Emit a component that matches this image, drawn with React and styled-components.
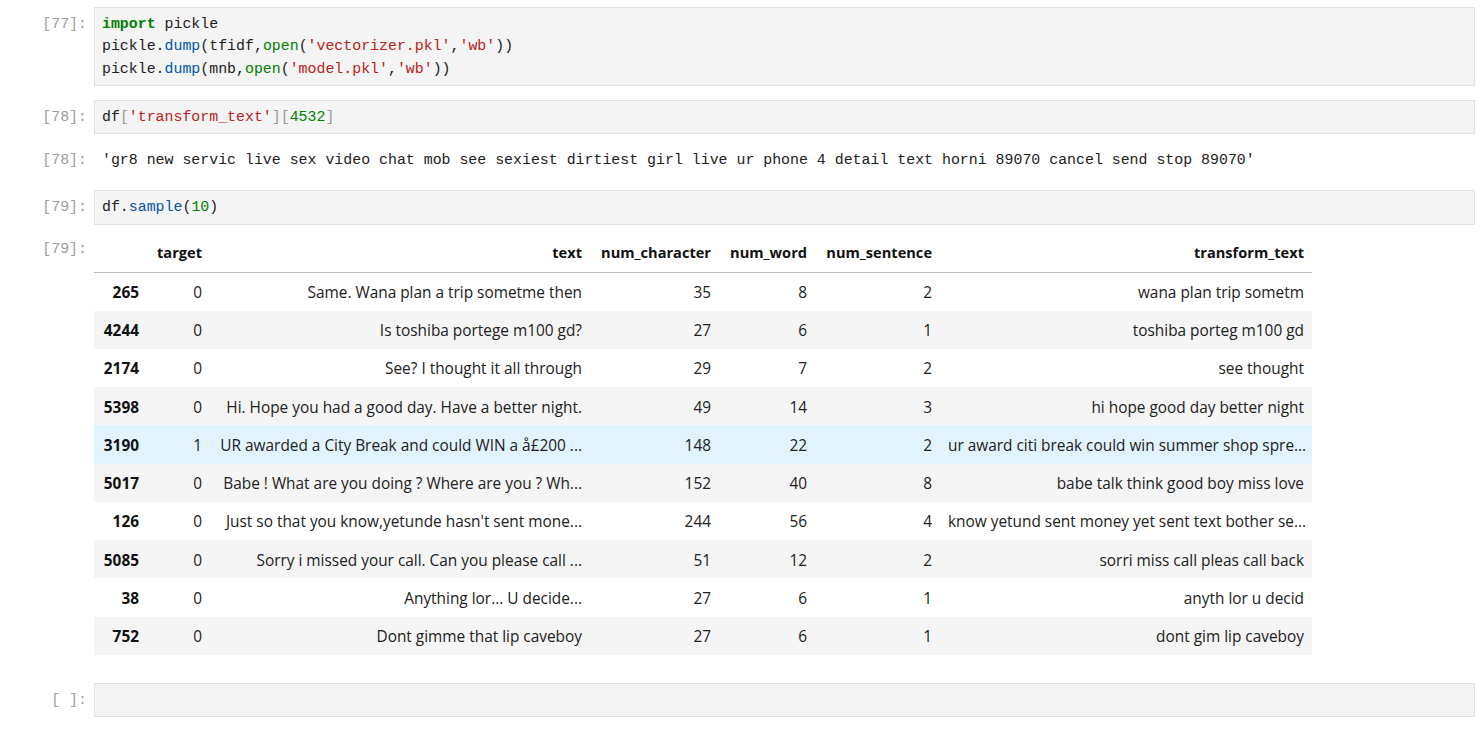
import React from "react";
import styled, { createGlobalStyle } from "styled-components";

const Global = createGlobalStyle`
  html, body { margin: 0; padding: 0; background: #fff; }
  body { font-family: "Open Sans", "Noto Sans", sans-serif; color: #212121; }
`;

const MONO = `"Liberation Mono", "DejaVu Sans Mono", monospace`;

const Notebook = styled.div`
  padding-top: 7px;
  display: flex;
  flex-direction: column;
`;

const Cell = styled.div`
  display: flex;
  flex-direction: column;
  margin-bottom: 14px;
`;

const Row = styled.div`
  display: flex;
  align-items: flex-start;
  margin-top: ${(p) => p.$top || 0}px;
  padding-bottom: ${(p) => p.$bottom || 0}px;
`;

const Prompt = styled.div`
  width: 94px;
  flex: none;
  box-sizing: border-box;
  padding-right: 7px;
  padding-top: ${(p) => p.$pad || 0}px;
  text-align: right;
  font-family: ${MONO};
  font-size: 14.9px;
  line-height: 22.3px;
  color: #9e9e9e;
  white-space: pre;
`;

const InputBox = styled.pre`
  flex: 1;
  margin: 0 9px 0 0;
  min-height: 22.3px;
  padding: 5px 7px;
  background: #f4f4f4;
  border: 1px solid #e0e0e0;
  font-family: ${MONO};
  font-size: 14.9px;
  line-height: 22.3px;
  color: #212121;
`;

const OutText = styled.pre`
  margin: 0;
  padding-left: 8px;
  font-family: ${MONO};
  font-size: 14.9px;
  line-height: 22.3px;
  color: #212121;
`;

const Kw = styled.span`
  color: #008000;
  font-weight: bold;
`;
const Fn = styled.span`
  color: #0055aa;
`;
const Bi = styled.span`
  color: #008000;
`;
const Str = styled.span`
  color: #ba2121;
`;
const Num = styled.span`
  color: #008000;
`;
const Br = styled.span`
  color: #999;
`;

const Table = styled.table`
  border-collapse: collapse;
  table-layout: fixed;
  width: 1218px;
  font-family: "Open Sans", "Noto Sans", sans-serif;
  font-size: 15.4px;
  color: #212121;
`;

const Th = styled.th`
  height: 36px;
  padding: 0 8px 2px;
  text-align: right;
  font-weight: bold;
  font-size: 14.6px;
  color: #111;
  border-bottom: 1px solid #bdbdbd;
  white-space: nowrap;
`;

const Tr = styled.tr`
  height: 38.25px;
  background: ${(p) => (p.$hover ? "#e1f4fd" : p.$odd ? "#f5f5f5" : "#fff")};
`;

const Td = styled.td`
  padding: 2px 8px 0;
  text-align: right;
  white-space: nowrap;
  overflow: hidden;
  font-weight: ${(p) => (p.$index ? "bold" : "normal")};
  font-size: ${(p) => (p.$index ? "15.4px" : "inherit")};
  color: ${(p) => (p.$index ? "#111" : "#212121")};
`;

const widths = [53, 63, 380, 129, 96, 125, 372];
const headers = ["", "target", "text", "num_character", "num_word", "num_sentence", "transform_text"];

const rows = [
  ["265", "0", "Same. Wana plan a trip sometme then", "35", "8", "2", "wana plan trip sometm"],
  ["4244", "0", "Is toshiba portege m100 gd?", "27", "6", "1", "toshiba porteg m100 gd"],
  ["2174", "0", "See? I thought it all through", "29", "7", "2", "see thought"],
  ["5398", "0", "Hi. Hope you had a good day. Have a better night.", "49", "14", "3", "hi hope good day better night"],
  ["3190", "1", "UR awarded a City Break and could WIN a å£200 ...", "148", "22", "2", "ur award citi break could win summer shop spre..."],
  ["5017", "0", "Babe ! What are you doing ? Where are you ? Wh...", "152", "40", "8", "babe talk think good boy miss love"],
  ["126", "0", "Just so that you know,yetunde hasn't sent mone...", "244", "56", "4", "know yetund sent money yet sent text bother se..."],
  ["5085", "0", "Sorry i missed your call. Can you please call ...", "51", "12", "2", "sorri miss call pleas call back"],
  ["38", "0", "Anything lor... U decide...", "27", "6", "1", "anyth lor u decid"],
  ["752", "0", "Dont gimme that lip caveboy", "27", "6", "1", "dont gim lip caveboy"],
];

export default function App() {
  return (
    <>
      <Global />
      <Notebook>
        <Cell>
          <Row>
            <Prompt $pad={6}>[77]:</Prompt>
            <InputBox>
              <Kw>import</Kw> pickle{"\n"}
              pickle.<Fn>dump</Fn>(tfidf,<Bi>open</Bi>(<Str>'vectorizer.pkl'</Str>,<Str>'wb'</Str>)){"\n"}
              pickle.<Fn>dump</Fn>(mnb,<Bi>open</Bi>(<Str>'model.pkl'</Str>,<Str>'wb'</Str>))
            </InputBox>
          </Row>
        </Cell>
        <Cell>
          <Row>
            <Prompt $pad={6}>[78]:</Prompt>
            <InputBox>
              df<Br>[</Br><Str>'transform_text'</Str><Br>][</Br><Num>4532</Num><Br>]</Br>
            </InputBox>
          </Row>
          <Row $top={15} $bottom={5}>
            <Prompt>[78]:</Prompt>
            <OutText>'gr8 new servic live sex video chat mob see sexiest dirtiest girl live ur phone 4 detail text horni 89070 cancel send stop 89070'</OutText>
          </Row>
        </Cell>
        <Cell>
          <Row>
            <Prompt $pad={6}>[79]:</Prompt>
            <InputBox>
              df.<Fn>sample</Fn>(<Num>10</Num>)
            </InputBox>
          </Row>
          <Row $top={9} $bottom={14}>
            <Prompt $pad={4}>[79]:</Prompt>
            <Table>
              <colgroup>
                {widths.map((w, i) => (
                  <col key={i} style={{ width: w }} />
                ))}
              </colgroup>
              <thead>
                <tr>
                  {headers.map((h, i) => (
                    <Th key={i}>{h}</Th>
                  ))}
                </tr>
              </thead>
              <tbody>
                {rows.map((r, i) => (
                  <Tr key={r[0]} $odd={i % 2 === 1} $hover={r[0] === "3190"}>
                    {r.map((c, j) => (
                      <Td key={j} $index={j === 0}>
                        {c}
                      </Td>
                    ))}
                  </Tr>
                ))}
              </tbody>
            </Table>
          </Row>
        </Cell>
        <Cell>
          <Row>
            <Prompt $pad={6}>[ ]:</Prompt>
            <InputBox>{" "}</InputBox>
          </Row>
        </Cell>
      </Notebook>
    </>
  );
}
